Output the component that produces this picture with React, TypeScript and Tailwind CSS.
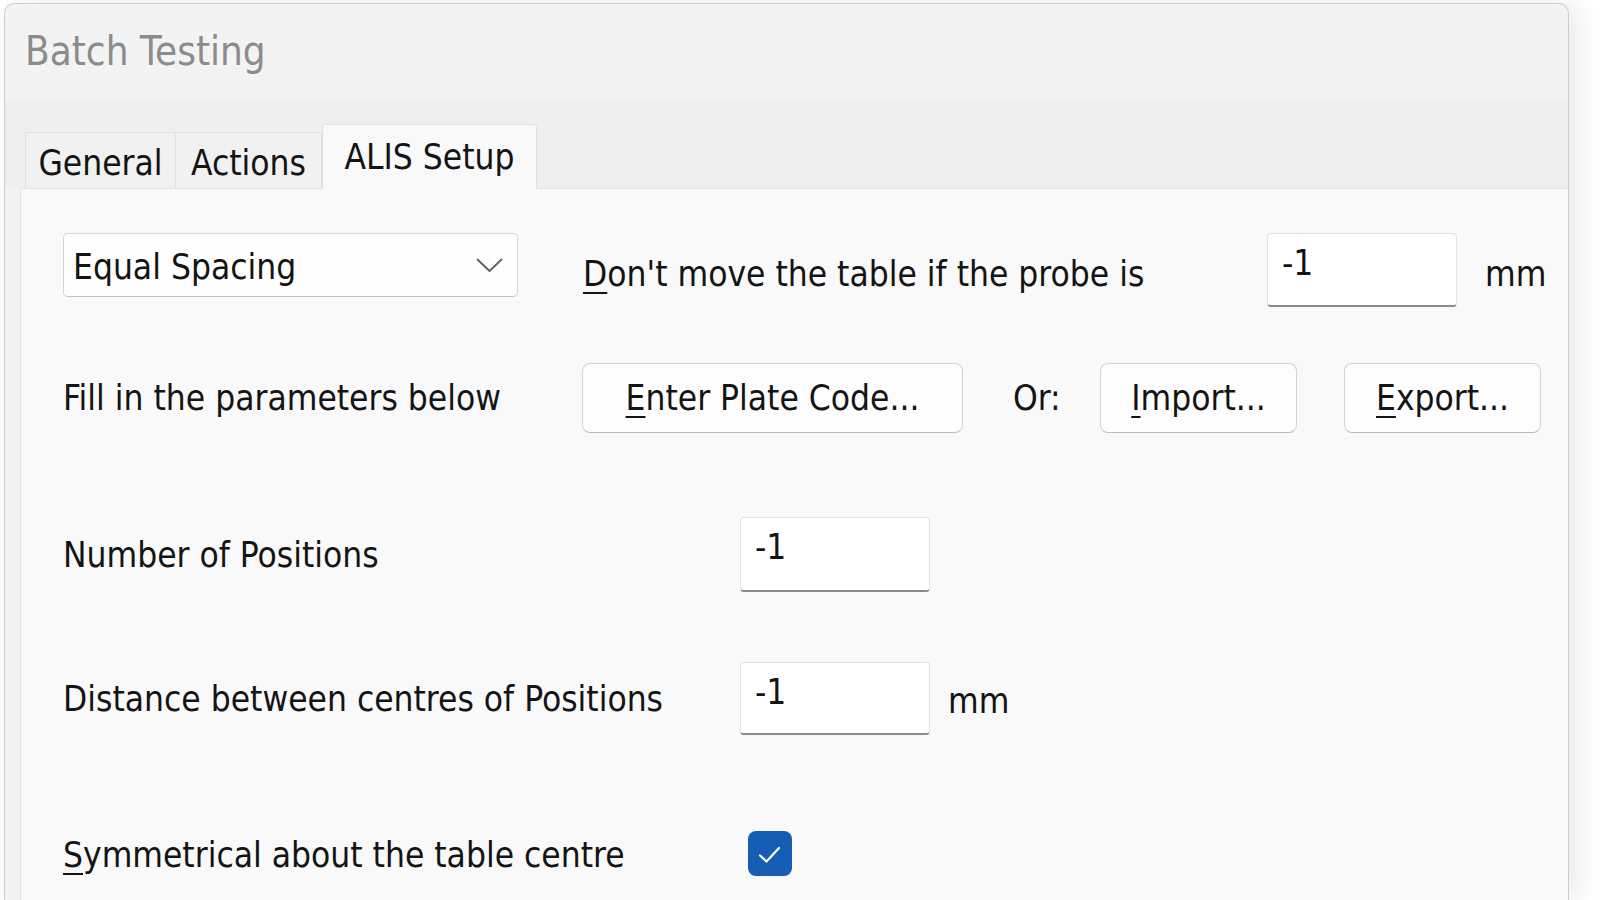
import React from "react";

const FONT = "font-['DejaVu_Sans_Condensed','Liberation_Sans',sans-serif]";

function U({ children }: { children: React.ReactNode }) {
  return <span className="underline decoration-[2px] underline-offset-[6px]">{children}</span>;
}

function TextBox({ w, h }: { w: string; h: string }) {
  return (
    <div
      className={`${w} ${h} shrink-0 bg-white border border-[#e2e2e2] border-b-2 border-b-[#8a8a8a] rounded-[4px] pl-[14px] pt-[7px] leading-[44px]`}
    >
      -1
    </div>
  );
}

function Btn({ w, children }: { w: string; children: React.ReactNode }) {
  return (
    <div
      className={`${w} h-[70px] shrink-0 flex items-center justify-center bg-[#fdfdfd] border border-[#d3d3d3] border-b-[#bcbcbc] rounded-[8px] leading-[44px]`}
    >
      {children}
    </div>
  );
}

export default function App() {
  return (
    <div className={`w-[1600px] h-[900px] bg-white overflow-hidden ${FONT} text-[35px] text-[#141414]`}>
      <div className="ml-[4px] mt-[3px] w-[1565px] h-[897px] flex flex-col rounded-t-[10px] border border-b-0 border-[#cdcdcd] bg-[#f3f3f3] overflow-hidden shadow-[10px_0_26px_rgba(0,0,0,0.08)]">
        {/* title bar */}
        <div className="h-[96px] shrink-0 pl-[20px] pt-[23px] text-[40px] leading-[48px] text-[#8c8c8c]">
          Batch Testing
        </div>
        {/* tab strip */}
        <div className="h-[88px] shrink-0 bg-[#efefef] flex items-end pl-[20px]">
          <div className="w-[151px] h-[56px] bg-[#f1f1f1] border border-b-0 border-[#e2e2e2] text-center pt-[8px] leading-[44px]">
            General
          </div>
          <div className="w-[146px] h-[56px] bg-[#f1f1f1] border border-b-0 border-l-0 border-[#e2e2e2] text-center pt-[8px] leading-[44px]">
            Actions
          </div>
          <div className="relative z-10 -mb-px w-[215px] h-[65px] bg-[#f9f9f9] border border-b-0 border-[#e2e2e2] rounded-t-[3px] text-center pt-[10px] leading-[44px]">
            ALIS Setup
          </div>
        </div>
        {/* panel */}
        <div className="flex-1 ml-[15px] bg-[#f9f9f9] border-t border-l border-[#e3e3e3] pl-[42px] flex flex-col">
          {/* row 1 */}
          <div className="mt-[44px] h-[74px] flex items-center">
            <div className="w-[455px] h-[64px] self-start shrink-0 flex items-center justify-between bg-[#fefefe] border border-[#d6d6d6] border-b-[#c2c2c2] rounded-[5px] pl-[9px] pr-[14px] pt-[3px] leading-[44px]">
              <span>Equal Spacing</span>
              <svg width="27" height="15" viewBox="0 0 27 15" fill="none" className="-mt-[3px]">
                <path d="M1.5 1.5 L13.5 13 L25.5 1.5" stroke="#5f5f5f" strokeWidth="1.8" strokeLinecap="round" strokeLinejoin="round" />
              </svg>
            </div>
            <div className="ml-[65px] w-[684px] shrink-0 mt-[7px] leading-[44px]">
              <U>D</U>on't move the table if the probe is
            </div>
            <TextBox w="w-[190px]" h="h-[74px]" />
            <div className="ml-[28px] mt-[7px] leading-[44px]">mm</div>
          </div>
          {/* row 2 */}
          <div className="mt-[56px] h-[70px] flex items-center">
            <div className="w-[519px] shrink-0 leading-[44px]">Fill in the parameters below</div>
            <Btn w="w-[381px]">
              <span>
                <U>E</U>nter Plate Code...
              </span>
            </Btn>
            <div className="ml-[50px] w-[87px] shrink-0 leading-[44px]">Or:</div>
            <Btn w="w-[197px]">
              <span>
                <U>I</U>mport...
              </span>
            </Btn>
            <div className="w-[47px] shrink-0" />
            <Btn w="w-[197px]">
              <span>
                <U>E</U>xport...
              </span>
            </Btn>
          </div>
          {/* row 3 */}
          <div className="mt-[84px] h-[75px] flex items-center">
            <div className="w-[677px] shrink-0 leading-[44px]">Number of Positions</div>
            <TextBox w="w-[190px]" h="h-[75px]" />
          </div>
          {/* row 4 */}
          <div className="mt-[70px] h-[73px] flex items-center">
            <div className="w-[677px] shrink-0 leading-[44px]">Distance between centres of Positions</div>
            <TextBox w="w-[190px]" h="h-[73px]" />
            <div className="ml-[18px] mt-[4px] leading-[44px]">mm</div>
          </div>
          {/* row 5 */}
          <div className="mt-[96px] h-[45px] flex items-center">
            <div className="w-[685px] shrink-0 mt-[2px] leading-[44px]">
              <U>S</U>ymmetrical about the table centre
            </div>
            <div className="w-[44px] h-[45px] shrink-0 rounded-[8px] bg-[#155eb3] flex items-center justify-center">
              <svg width="44" height="45" viewBox="0 0 44 45" fill="none">
                <path d="M12 24.5 L18.5 30.5 L31 17" stroke="#ffffff" strokeWidth="2.2" strokeLinecap="round" strokeLinejoin="round" />
              </svg>
            </div>
          </div>
        </div>
      </div>
    </div>
  );
}
